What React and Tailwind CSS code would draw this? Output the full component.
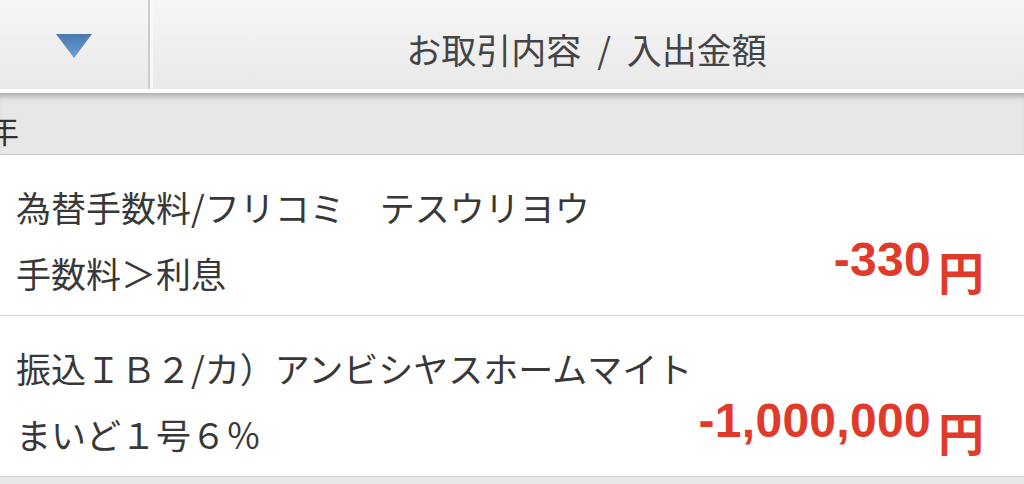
// Transaction list: sticky header, date section bar, two entries

const JP = "font-['Noto_Sans_CJK_JP',sans-serif]";

function DownTriangle() {
  return (
    <svg width="36" height="24" viewBox="0 0 36 24">
      <defs>
        <linearGradient id="tri" x1="0" y1="0" x2="0" y2="1">
          <stop offset="0" stopColor="#4a78b0" />
          <stop offset="1" stopColor="#6a9fd6" />
        </linearGradient>
      </defs>
      <polygon points="0,0 36,0 18,24" fill="url(#tri)" />
    </svg>
  );
}

function Amount({ value }) {
  return (
    <div className="flex items-end">
      <span className="font-['Liberation_Sans',Arial,sans-serif] font-bold text-[48px] leading-[48px] tracking-[0.3px] text-[#e03a2b] mb-[9px]">
        {value}
      </span>
      <span className={`${JP} font-bold text-[46px] leading-[46px] text-[#e03a2b] ml-[7px]`}>円</span>
    </div>
  );
}

function Entry({ title, sub, amount }) {
  return (
    <div className="h-[161px] bg-white border-b border-[#d4d4d4] pl-[16px] pr-[40px] pt-[34px] flex flex-col">
      <div className="text-[35px] leading-[35px] text-[#383838] whitespace-nowrap">{title}</div>
      <div className="mt-[31px] flex justify-between items-start">
        <div className="text-[35px] leading-[35px] text-[#383838] whitespace-nowrap">{sub}</div>
        <div className="-mt-[19px]">
          <Amount value={amount} />
        </div>
      </div>
    </div>
  );
}

export default function App() {
  return (
    <div className={`w-[1024px] h-[484px] overflow-hidden bg-[#e8e8e8] ${JP}`}>
      {/* Header */}
      <div className="h-[89px] flex bg-gradient-to-b from-[#f6f6f6] to-[#e9e9e9]">
        <div className="w-[148px] flex items-center justify-center pt-[2px]">
          <DownTriangle />
        </div>
        <div className="w-[2px] bg-[#cccccc]" />
        <div className="w-[3px] bg-[#f8f8f8]" />
        <div className="flex-1 flex items-center justify-center pr-[4px] pt-[8px] text-[35px] leading-[35px] text-[#444444] [word-spacing:8px] whitespace-nowrap">
          お取引内容 / 入出金額
        </div>
      </div>
      <div className="h-[4px] bg-white" />

      {/* Section bar */}
      <div className="h-[62px] bg-[#e7e7e7] border-b border-[#c9c9c9] shadow-[inset_0_7px_6px_-4px_rgba(0,0,0,0.28)] flex items-center overflow-hidden pt-[10px]">
        <span className="-ml-[13px] text-[32px] leading-[32px] text-[#333333]">年</span>
      </div>

      <Entry title="為替手数料/フリコミ　テスウリヨウ" sub="手数料＞利息" amount="-330" />
      <Entry title="振込ＩＢ２/カ）アンビシヤスホームマイト" sub="まいど１号６％" amount="-1,000,000" />
    </div>
  );
}
